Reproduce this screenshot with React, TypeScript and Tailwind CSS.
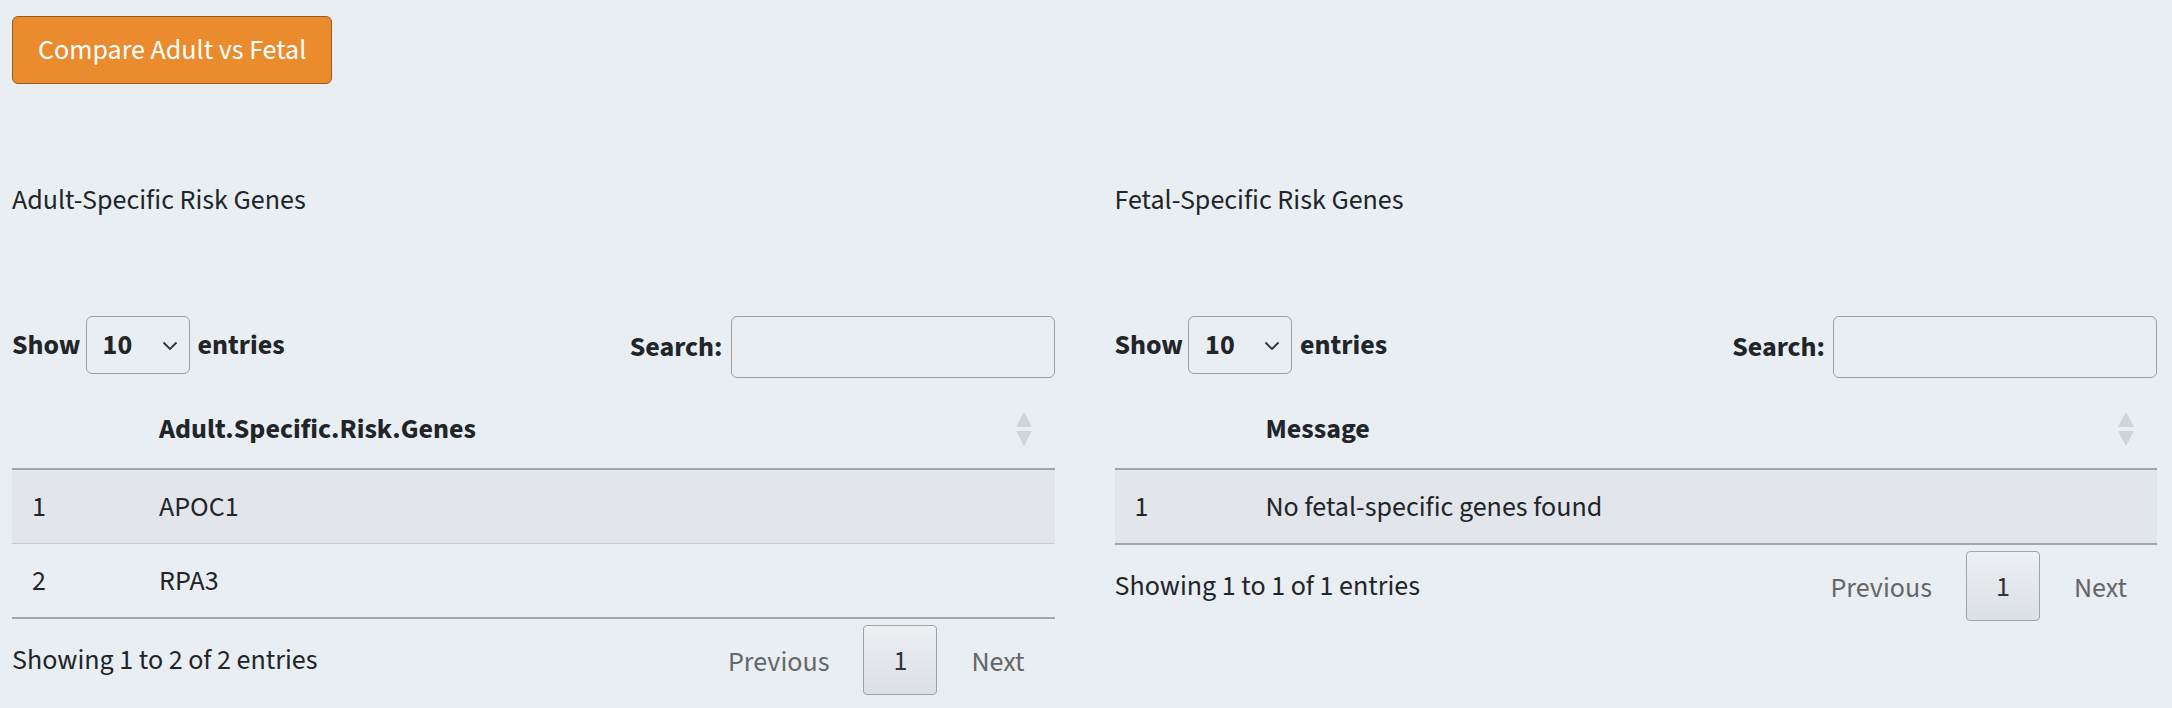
import React from "react";

const FONT = "'Source Sans 3', 'Noto Sans', sans-serif";

function SortIcon() {
  return (
    <svg width="16" height="34" viewBox="0 0 16 34" className="shrink-0">
      <polygon points="8,0 16,15 0,15" fill="#d0d4d9" />
      <polygon points="0,19 16,19 8,34" fill="#d0d4d9" />
    </svg>
  );
}

function Panel({
  title,
  header,
  rows,
  info,
  firstCol,
}: {
  title: string;
  header: string;
  rows: string[];
  info: string;
  firstCol: string;
}) {
  return (
    <div className="flex-1 min-w-0">
      <div className="text-[28px] leading-[42px]">{title}</div>
      <div className="mt-[95px] flex items-start justify-between">
        <div className="flex items-center font-bold text-[28px] leading-[42px]">
          <span>Show</span>
          <div className="relative ml-[5px] flex h-[58px] w-[104px] items-center rounded-[6px] border-[1.75px] border-[#9e9e9e] pl-[16px]">
            <span>10</span>
            <svg
              width="16"
              height="10"
              viewBox="0 0 16 10"
              className="absolute right-[11px] top-[24px]"
            >
              <path d="M1.5 1.5 L8 8 L14.5 1.5" fill="none" stroke="#333" strokeWidth="1.8" />
            </svg>
          </div>
          <span className="ml-[8px]">entries</span>
        </div>
        <div className="flex items-center gap-[8px] font-bold text-[28px] leading-[42px]">
          <span>Search:</span>
          <div className="h-[62px] w-[324px] rounded-[6px] border-[1.75px] border-[#9e9e9e]" />
        </div>
      </div>
      <table className="mt-[14px] w-full border-collapse text-[28px] leading-[42px]">
        <thead>
          <tr className="border-b-2 border-[#a2a5aa]">
            <th className={firstCol + " pt-[16px] pb-[18px]"} />
            <th className="pt-[16px] pb-[18px] pl-[18px] pr-[23px] text-left font-bold">
              <div className="flex items-center justify-between">
                <span>{header}</span>
                <SortIcon />
              </div>
            </th>
          </tr>
        </thead>
        <tbody className="border-b-2 border-[#a2a5aa]">
          {rows.map((r, i) => (
            <tr
              key={r}
              className={
                (i % 2 === 0 ? "bg-[#e2e6ea] " : "") +
                (i > 0 ? "border-t border-[#c7cacf]" : "")
              }
            >
              <td className="pt-[16px] pb-[15px] pl-[20px]">{i + 1}</td>
              <td className="pt-[16px] pb-[15px] pl-[18px]">{r}</td>
            </tr>
          ))}
        </tbody>
      </table>
      <div className="flex items-start justify-between text-[28px] leading-[42px]">
        <div className="mt-[20px]">{info}</div>
        <div className="mt-[6px] flex items-center">
          <span className="px-[30px] pt-[3px] text-[#666666]">Previous</span>
          <span className="ml-[4px] flex h-[70px] w-[74px] items-center justify-center rounded-[4px] border-[1.75px] border-[#a3a3a3] bg-gradient-to-b from-[#edf0f3] to-[#dcdfe3] pt-[2px] text-[#333333]">
            1
          </span>
          <span className="ml-[4px] px-[30px] pt-[3px] text-[#666666]">Next</span>
        </div>
      </div>
    </div>
  );
}

export default function App() {
  return (
    <div
      className="h-[708px] overflow-hidden bg-[#e9eef3] pl-[12px] pr-[15px] pt-[16px] text-[#212529]"
      style={{ fontFamily: FONT }}
    >
      <button className="h-[68px] rounded-[6px] border-[1.75px] border-[#9a5a1c] bg-[#ea8b2e] px-[25px] text-[28px] leading-[42px] text-white">
        Compare Adult vs Fetal
      </button>
      <div className="mt-[95px] flex gap-[60px]">
        <Panel
          title="Adult-Specific Risk Genes"
          header="Adult.Specific.Risk.Genes"
          rows={["APOC1", "RPA3"]}
          info="Showing 1 to 2 of 2 entries"
          firstCol="w-[129px]"
        />
        <Panel
          title="Fetal-Specific Risk Genes"
          header="Message"
          rows={["No fetal-specific genes found"]}
          info="Showing 1 to 1 of 1 entries"
          firstCol="w-[133px]"
        />
      </div>
    </div>
  );
}
